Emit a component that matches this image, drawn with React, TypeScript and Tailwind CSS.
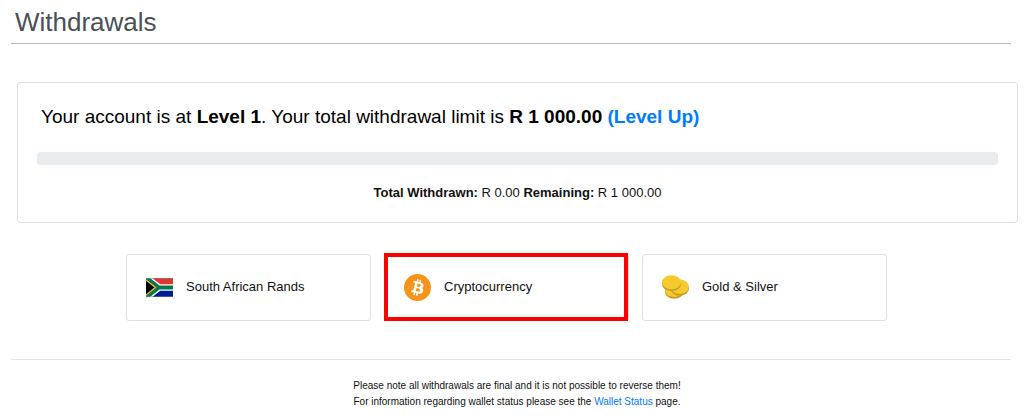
import React from "react";

interface WithdrawalOptionProps {
    label: string
    href: string
    icon: React.ReactNode
    isHighlighted?: boolean
}

const FlagIcon: React.FC = () => (
    <svg className="w-[27px] h-[27px]" viewBox="0 0 27 27" aria-hidden="true">
        <clipPath id="flag-area">
            <rect x="0" y="4" width="27" height="19"/>
        </clipPath>
        <g clipPath="url(#flag-area)">
            <rect x="0" y="4" width="27" height="9.5" fill="#e0362c"/>
            <rect x="0" y="13.5" width="27" height="9.5" fill="#001b96"/>
            <path d="M-1 2.5 L13 13.5 L-1 24.5 M13 13.5 H27" fill="none" stroke="#fff" strokeWidth="6.6"/>
            <path d="M-1 2.5 L13 13.5 L-1 24.5 M13 13.5 H27" fill="none" stroke="#067a4c" strokeWidth="3.8"/>
            <path d="M-1 5.2 L9.4 13.5 L-1 21.8 Z" fill="#000" stroke="#f5b335" strokeWidth="1.3"/>
            <path d="M0 4.3 H27 M0 22.7 H27" stroke="#8c8cae" strokeWidth="0.6"/>
        </g>
    </svg>
)

const BitcoinIcon: React.FC = () => (
    <svg className="w-[27px] h-[27px]" viewBox="0 0 32 32" aria-hidden="true">
        <circle cx="16" cy="16" r="16" fill="#f7931a"/>
        <path
            fill="#fff"
            fillRule="evenodd"
            d="M23.189 14.02c.314-2.096-1.283-3.223-3.465-3.975l.708-2.84-1.728-.43-.69 2.765c-.454-.114-.92-.22-1.385-.326l.695-2.783L15.596 6l-.708 2.839c-.376-.086-.746-.17-1.104-.26l.002-.009-2.384-.595-.46 1.846s1.283.294 1.256.312c.7.175.826.638.805 1.006l-.806 3.235c.048.012.11.03.18.057l-.183-.045-1.13 4.532c-.086.212-.303.531-.793.41.018.025-1.256-.313-1.256-.313l-.858 1.978 2.25.561c.418.105.828.215 1.231.318l-.715 2.872 1.727.43.708-2.84c.472.127.93.245 1.378.357l-.706 2.828 1.728.43.715-2.866c2.948.558 5.164.333 6.097-2.333.752-2.146-.037-3.385-1.588-4.192 1.13-.26 1.98-1.003 2.207-2.538zm-3.95 5.538c-.533 2.147-4.148.986-5.32.695l.95-3.805c1.172.293 4.929.872 4.37 3.11zm.535-5.569c-.487 1.953-3.495.96-4.47.717l.86-3.45c.975.243 4.118.696 3.61 2.733z"
        />
    </svg>
)

const CoinsIcon: React.FC = () => (
    <svg className="w-[27px] h-[27px]" viewBox="0 0 27 27" aria-hidden="true">
        <path d="M3 16.5 V18.3 A9.2 6.4 0 0 0 21.4 18.3 V16.5 Z" fill="#c99a26"/>
        <ellipse cx="12.2" cy="16.8" rx="9.2" ry="6.2" fill="#f6ca2c"/>
        <path d="M8.4 13 V14.6 A9.3 7.2 0 0 0 27 14.6 V13 Z" fill="#c99a26"/>
        <ellipse cx="17.7" cy="12.8" rx="9.3" ry="7.2" fill="#f6ca2c"/>
        <path d="M0 8.4 V10 A9.5 7 0 0 0 19 10 V8.4 Z" fill="#c99a26"/>
        <ellipse cx="9.5" cy="8.3" rx="9.5" ry="7.1" fill="#f6ca2c"/>
    </svg>
)

const WithdrawalOption: React.FC<WithdrawalOptionProps> = ({label, href, icon, isHighlighted}) => {
    return (
        <a href={href} className="relative flex items-center gap-[13px] h-[67px] pl-[19px] pr-4 border border-[#dee0e4] rounded-[3px] text-[13px] leading-5 text-[#111]">
            {icon}
            <span className="pb-px">{label}</span>
            {isHighlighted && (
                <span className="absolute -top-[2px] -bottom-px -left-px right-0 border-4 border-[#ff0000]"/>
            )}
        </a>
    )
}

export default function App() {
    return (
        <main className="pl-[11px] pr-[18px] pb-[7px] bg-white font-['Liberation_Sans',Arial,sans-serif] text-[#111]">
            <h1 className="h-11 pl-1 pt-[6px] border-b border-[#b9b9b9] text-[26px] leading-8 text-[#495057]">Withdrawals</h1>

            <section className="mt-[38px] ml-[6px] -mr-[7px] px-[19px] pt-5 pb-[19px] border border-[#dee0e4] rounded-[3px]">
                <p className="pl-1 text-[19px] leading-7 text-black">
                    Your account is at <strong>Level 1</strong>. Your total withdrawal limit is <strong>R 1 000.00</strong>{" "}
                    <a href="#level-up" className="font-bold text-[#007bff]">(Level Up)</a>
                </p>
                <div
                    role="progressbar"
                    aria-label="Withdrawal limit used"
                    aria-valuenow={0}
                    aria-valuemin={0}
                    aria-valuemax={1000}
                    className="mt-[21px] h-[13px] rounded-[3px] bg-[#e9ecef]"
                />
                <p className="mt-[18px] text-center text-[13px] leading-5">
                    <strong>Total Withdrawn:</strong> R 0.00 <strong>Remaining:</strong> R 1 000.00
                </p>
            </section>

            <nav className="mt-[31px] pr-[9px]">
                <div className="grid grid-cols-3 gap-[13px] w-full max-w-[761px] mx-auto">
                    <WithdrawalOption label="South African Rands" href="#rands" icon={<FlagIcon/>}/>
                    <WithdrawalOption label="Cryptocurrency" href="#crypto" icon={<BitcoinIcon/>} isHighlighted/>
                    <WithdrawalOption label="Gold & Silver" href="#gold" icon={<CoinsIcon/>}/>
                </div>
            </nav>

            <footer className="mt-[38px] pt-[18px] pl-3 border-t border-[#e3e3e3] text-center text-[10px] leading-4">
                <p>Please note all withdrawals are final and it is not possible to reverse them!</p>
                <p>
                    For information regarding wallet status please see the{" "}
                    <a href="#wallet-status" className="text-[#007bff]">Wallet Status</a> page.
                </p>
            </footer>
        </main>
    )
}
